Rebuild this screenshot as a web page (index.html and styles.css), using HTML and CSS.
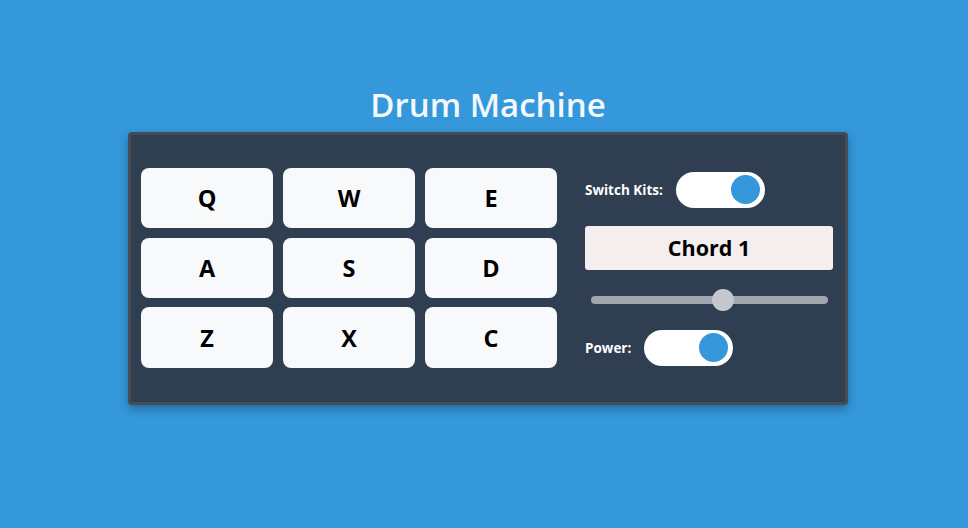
FILE: index.html
```html
<!DOCTYPE html>
<html>
<head>
<meta charset="utf-8">
<link rel="stylesheet" href="styles.css">
</head>
<body>
<main class="page">
  <h1 class="title">Drum Machine</h1>
  <div class="machine">
    <div class="pads">
      <div class="pad">Q</div>
      <div class="pad">W</div>
      <div class="pad">E</div>
      <div class="pad">A</div>
      <div class="pad">S</div>
      <div class="pad">D</div>
      <div class="pad">Z</div>
      <div class="pad">X</div>
      <div class="pad">C</div>
    </div>
    <div class="controls">
      <div class="control-row">
        <span class="label">Switch Kits:</span>
        <div class="toggle"><span class="knob"></span></div>
      </div>
      <div class="display">Chord 1</div>
      <div class="slider"><span class="thumb"></span></div>
      <div class="control-row">
        <span class="label">Power:</span>
        <div class="toggle"><span class="knob"></span></div>
      </div>
    </div>
  </div>
</main>
</body>
</html>
```
FILE: styles.css
```css
html, body {
  margin: 0;
  padding: 0;
}
body {
  background: #3498db;
  font-family: "Open Sans", "Noto Sans", sans-serif;
  width: 968px;
  height: 528px;
  overflow: hidden;
}
.page {
  display: flex;
  flex-direction: column;
  align-items: center;
  padding: 84px 0 0 8px;
}
.title {
  margin: 0 0 6px 0;
  color: #f2f8fd;
  font-size: 33px;
  font-weight: 600;
  line-height: 42px;
}
.machine {
  box-sizing: border-box;
  width: 720px;
  height: 273px;
  background: #2f3e50;
  border: 3px solid #454c56;
  border-radius: 4px;
  box-shadow: 0 4px 10px rgba(0, 0, 0, 0.3);
  display: flex;
  align-items: center;
  padding: 0 12px 0 10px;
  gap: 28px;
}
.pads {
  display: grid;
  grid-template-columns: repeat(3, 132px);
  grid-auto-rows: 60px;
  column-gap: 10px;
  row-gap: 10px;
  margin-top: -1px;
}
.pads .pad:nth-child(n+7) {
  margin-top: -1px;
}
.pad {
  background: #f8f9fb;
  border-radius: 8px;
  display: flex;
  align-items: center;
  justify-content: center;
  font-size: 23.5px;
  font-weight: 700;
  color: #000;
}
.controls {
  flex: 1;
  display: flex;
  flex-direction: column;
}
.control-row {
  display: flex;
  align-items: center;
  gap: 13px;
}
.label {
  color: #ffffff;
  font-size: 13.5px;
  font-weight: 700;
}
.toggle {
  width: 89px;
  height: 36px;
  background: #ffffff;
  border-radius: 18px;
  display: flex;
  align-items: center;
  justify-content: flex-end;
  padding-right: 5px;
  box-sizing: border-box;
}
.knob {
  width: 29px;
  height: 29px;
  border-radius: 50%;
  background: #3498db;
}
.display {
  margin-top: 18px;
  height: 44px;
  background: #f5eeee;
  border-radius: 3px;
  display: flex;
  align-items: center;
  justify-content: center;
  font-size: 21.5px;
  font-weight: 700;
  color: #000;
}
.slider {
  margin: 26px 5px 0 6px;
  height: 8px;
  background: #a1a5ac;
  border-radius: 4px;
  position: relative;
}
.thumb {
  position: absolute;
  left: 121px;
  top: -7px;
  width: 22px;
  height: 22px;
  border-radius: 50%;
  background: #c4c8ce;
}
.controls .control-row:last-child {
  margin-top: 26px;
}
```
